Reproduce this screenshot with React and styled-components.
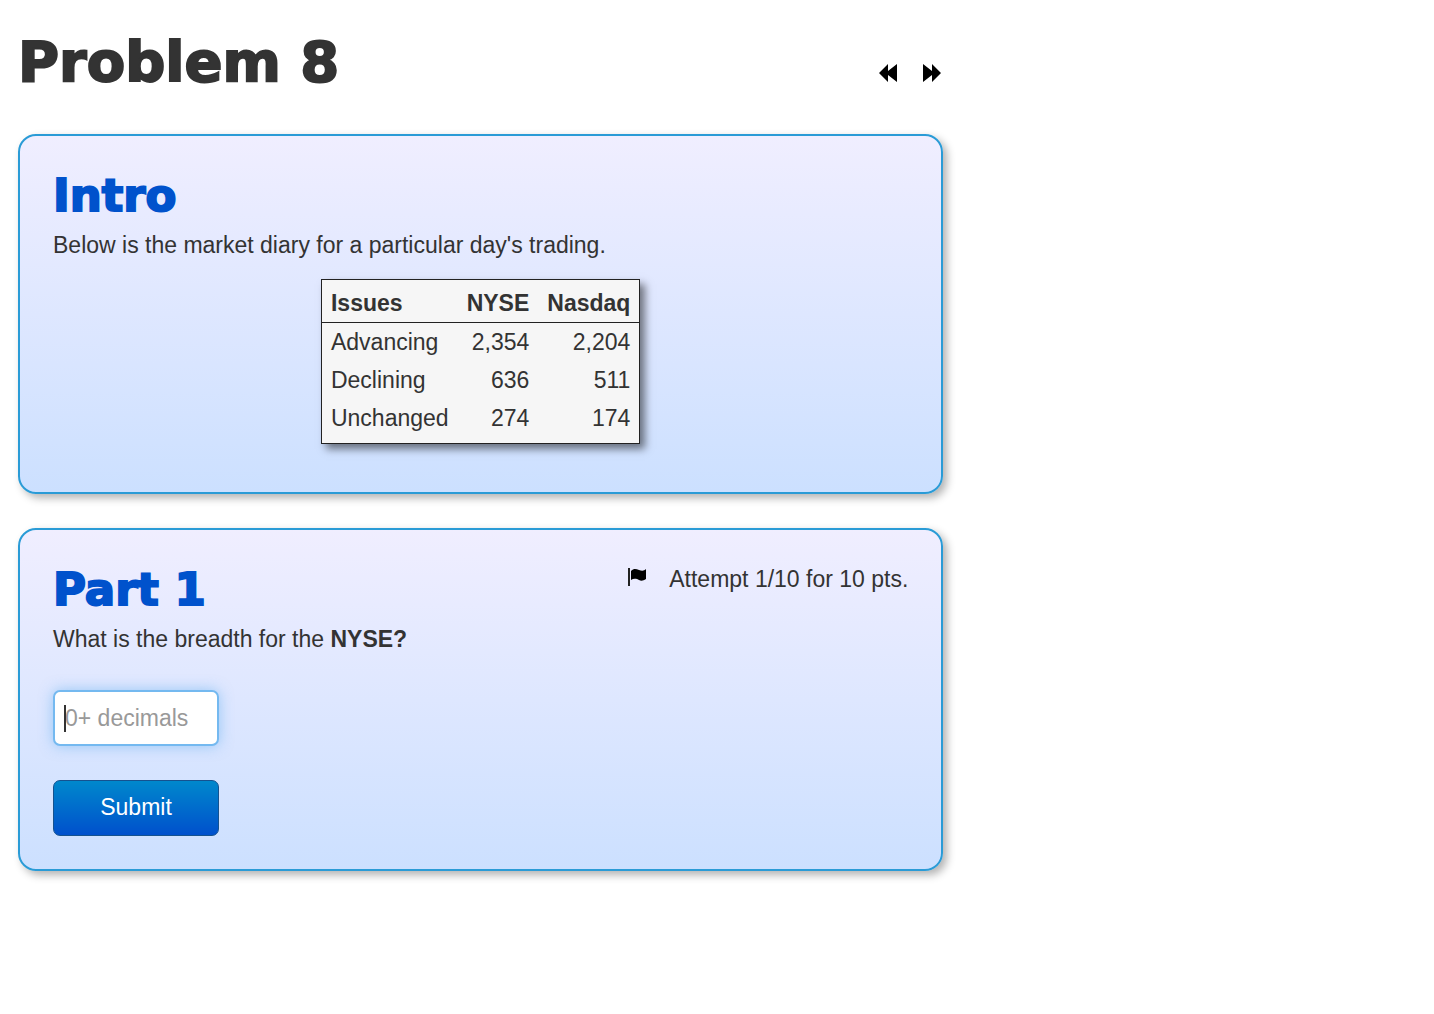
import React, { useState } from 'react';
import styled, { createGlobalStyle } from 'styled-components';

const GlobalStyle = createGlobalStyle`
	* {
		box-sizing: border-box;
	}

	body {
		margin: 0;
		background-color: #fff;
		color: #333;
		font-family: 'Liberation Sans', Arial, sans-serif;
		font-size: 23px;
		line-height: 38px;
	}
`;

const issues = [
	{ name: 'Advancing', nyse: '2,354', nasdaq: '2,204' },
	{ name: 'Declining', nyse: '636', nasdaq: '511' },
	{ name: 'Unchanged', nyse: '274', nasdaq: '174' },
];

const Page = styled.div`
	display: grid;
	grid-template-columns: 2fr 1fr;
	gap: 10px;
	padding: 24px 18px;
`;

const Main = styled.main`
	display: flex;
	flex-direction: column;
	gap: 34px;
`;

const Header = styled.header`
	display: flex;
	align-items: center;
	justify-content: space-between;
`;

const Title = styled.h1`
	margin: 0;
	font-family: 'Arial Black', 'DejaVu Sans', sans-serif;
	font-size: 56px;
	font-weight: 900;
	line-height: 76px;
	-webkit-text-stroke: 2px currentColor;
`;

const Pager = styled.nav`
	display: flex;
	gap: 24px;
	padding: 22px 2px 0 0;
`;

const PagerLink = styled.a`
	display: flex;
	color: #000;
`;

const Card = styled.section`
	padding: 32px 33px 33px;
	border: 2px solid #2a9bd6;
	border-radius: 18px;
	background: linear-gradient(#f0eeff, #cce0ff);
	box-shadow: 4px 4px 8px rgba(0, 0, 0, 0.3);
`;

const CardHeader = styled.div`
	display: flex;
	justify-content: space-between;
`;

const CardTitle = styled.h2`
	margin: 0 0 2px;
	color: #0052cc;
	font-family: 'Arial Black', 'DejaVu Sans', sans-serif;
	font-size: 45px;
	font-weight: 900;
	line-height: 56px;
	-webkit-text-stroke: 2px currentColor;
`;

const Text = styled.p`
	margin: 0;
`;

const Attempt = styled.div`
	display: flex;
	gap: 22px;
	line-height: 34px;
`;

const FlagIcon = styled.svg`
	margin-top: 6px;
`;

const Table = styled.table`
	margin: 15px auto;
	padding-bottom: 6px;
	border: 1px solid #222;
	border-spacing: 0;
	background-color: #f6f6f6;
	box-shadow: 5px 5px 8px rgba(0, 0, 0, 0.5);
`;

const Th = styled.th`
	padding: 4px 9px 0;
	border-bottom: 1px solid #222;
	text-align: ${({ $left }) => ($left ? 'left' : 'right')};
`;

const Td = styled.td`
	padding: 0 9px;
	text-align: ${({ $left }) => ($left ? 'left' : 'right')};
`;

const Form = styled.form`
	display: flex;
	flex-direction: column;
	align-items: flex-start;
	gap: 34px;
	margin-top: 32px;
`;

const Field = styled.label`
	position: relative;
	display: flex;

	&:has(input:placeholder-shown)::after {
		content: '';
		position: absolute;
		top: 15px;
		left: 11px;
		width: 2px;
		height: 27px;
		background-color: #333;
	}
`;

const Input = styled.input`
	width: 166px;
	height: 56px;
	padding: 0 10px;
	border: 2px solid #74b9f0;
	border-radius: 7px;
	outline: none;
	background-color: #fff;
	box-shadow: 0 0 14px rgba(82, 168, 236, 0.5);
	color: #555;
	font: inherit;

	&::placeholder {
		color: #999;
		opacity: 1;
	}
`;

const SubmitButton = styled.button`
	width: 166px;
	height: 56px;
	padding: 0 0 2px;
	border: 1px solid #15528f;
	border-radius: 7px;
	background: linear-gradient(#0088cc, #0050cc);
	color: #fff;
	font: inherit;
	cursor: pointer;
`;

const App = () => {
	const [answer, setAnswer] = useState('');

	return (
		<Page>
			<GlobalStyle />
			<Main>
				<Header>
					<Title>Problem 8</Title>
					<Pager>
						<PagerLink href="#previous" aria-label="Previous problem">
							<svg width="19" height="18" viewBox="0 0 19 18">
								<path d="M0 9 9 0v7L18 0v18L9 11v7Z" fill="currentColor" />
							</svg>
						</PagerLink>
						<PagerLink href="#next" aria-label="Next problem">
							<svg width="19" height="18" viewBox="0 0 19 18">
								<path d="M19 9 10 0v7L1 0v18l9-7v7Z" fill="currentColor" />
							</svg>
						</PagerLink>
					</Pager>
				</Header>

				<Card>
					<CardTitle>Intro</CardTitle>
					<Text>Below is the market diary for a particular day's trading.</Text>
					<Table>
						<thead>
							<tr>
								<Th $left>Issues</Th>
								<Th>NYSE</Th>
								<Th>Nasdaq</Th>
							</tr>
						</thead>
						<tbody>
							{issues.map((issue) => (
								<tr key={issue.name}>
									<Td $left>{issue.name}</Td>
									<Td>{issue.nyse}</Td>
									<Td>{issue.nasdaq}</Td>
								</tr>
							))}
						</tbody>
					</Table>
				</Card>

				<Card>
					<CardHeader>
						<CardTitle>Part 1</CardTitle>
						<Attempt>
							<FlagIcon width="19" height="20" viewBox="0 0 19 20" aria-hidden="true">
								<path d="M0 0h2v18H0Z" fill="#222" />
								<path d="M3 3C6 0 8 1 11 2s5 1 7-1v10c-3 2-5 2-7 1s-5-2-8 0Z" fill="#000" />
							</FlagIcon>
							<span>Attempt 1/10 for 10 pts.</span>
						</Attempt>
					</CardHeader>
					<Text>
						What is the breadth for the <strong>NYSE?</strong>
					</Text>
					<Form onSubmit={(event) => event.preventDefault()}>
						<Field>
							<Input
								type="text"
								aria-label="Answer"
								placeholder="0+ decimals"
								value={answer}
								onChange={({ target }) => setAnswer(target.value)}
							/>
						</Field>
						<SubmitButton type="submit">Submit</SubmitButton>
					</Form>
				</Card>
			</Main>
		</Page>
	);
};

export default App;
